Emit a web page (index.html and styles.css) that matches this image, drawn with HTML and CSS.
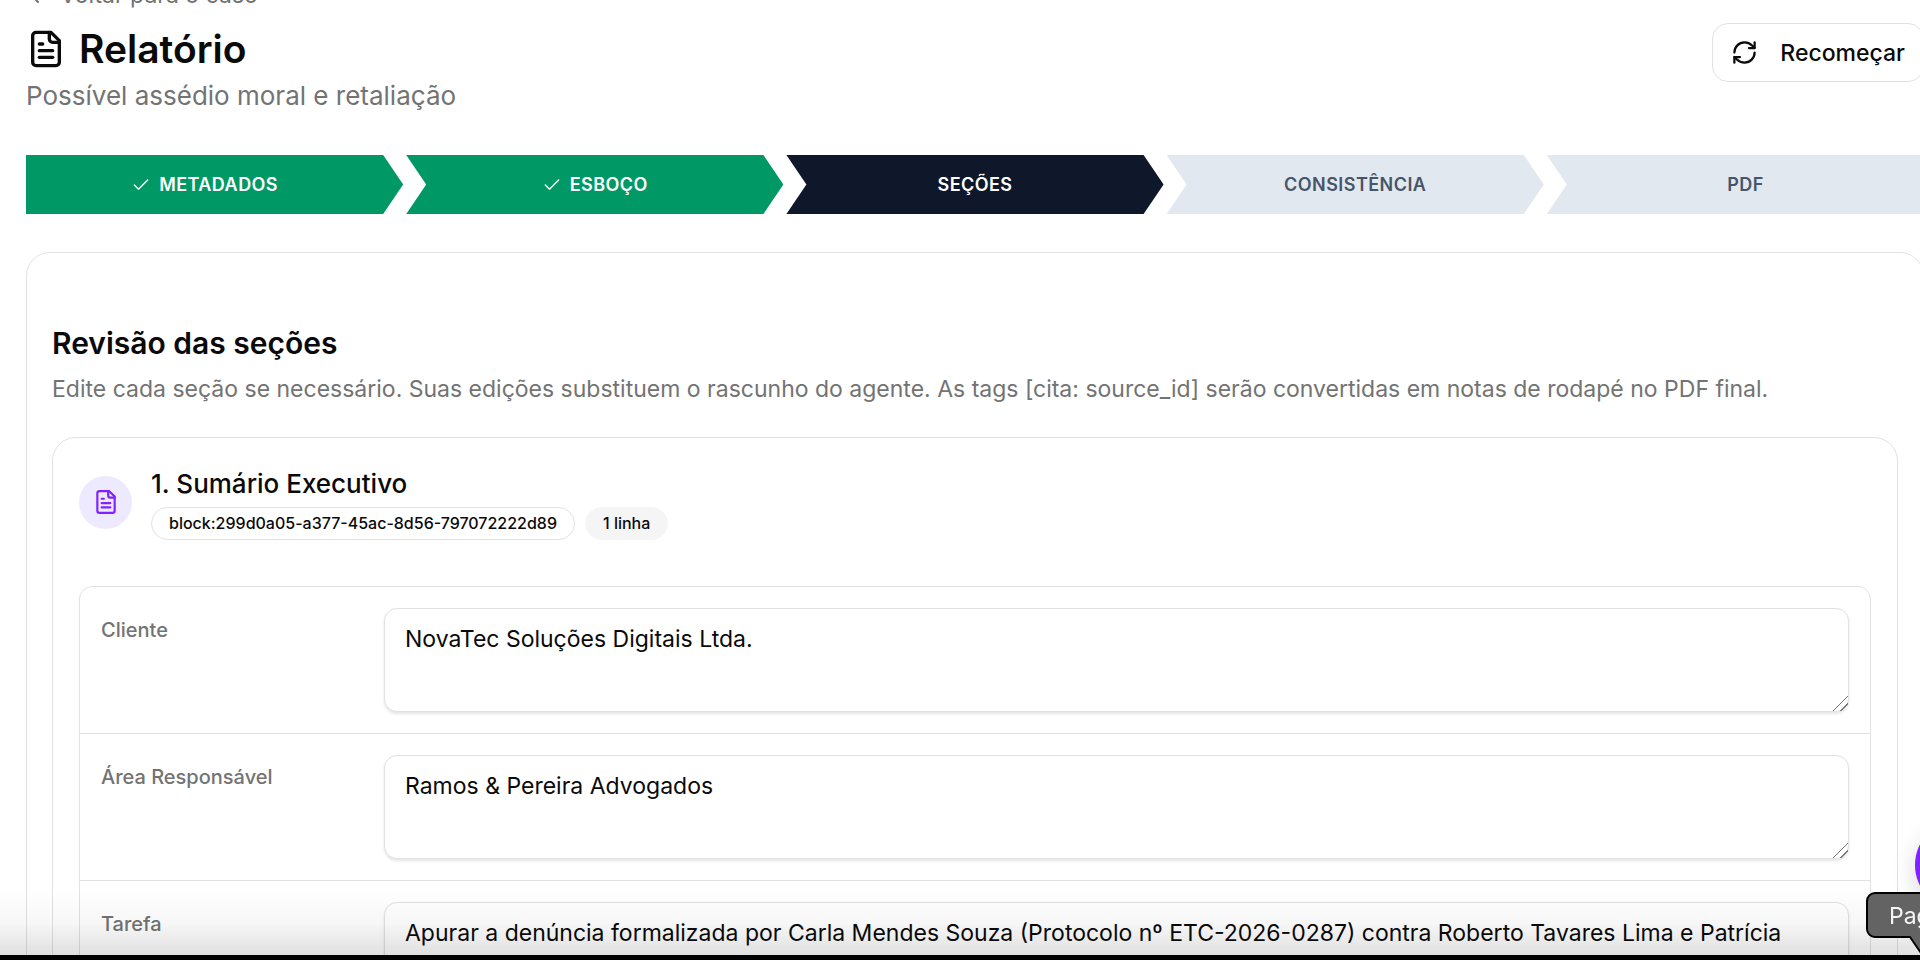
FILE: index.html
```html
<!DOCTYPE html>
<html lang="pt-BR">
<head>
  <meta charset="UTF-8" />
  <meta name="viewport" content="width=device-width, initial-scale=1.0"/>
  <title>Relatório</title>
  <link rel="stylesheet" href="styles.css">
</head>
<body>
  <main class="page">
    <a class="back" href="#">
      <svg class="back-icon" viewBox="0 0 24 24"><path d="m12 19-7-7 7-7"/><path d="M19 12H5"/></svg>
      Voltar para o caso
    </a>

    <header class="header">
      <div>
        <h1 class="title">
          <svg class="title-icon" viewBox="0 0 24 24"><path d="M15 2H6a2 2 0 0 0-2 2v16a2 2 0 0 0 2 2h12a2 2 0 0 0 2-2V7Z"/><path d="M14 2v4a2 2 0 0 0 2 2h4"/><path d="M10 9H8"/><path d="M16 13H8"/><path d="M16 17H8"/></svg>
          Relatório
        </h1>
        <p class="subtitle">Possível assédio moral e retaliação</p>
      </div>
      <button class="restart" type="button">
        <svg class="restart-icon" viewBox="0 0 24 24"><path d="M3 12a9 9 0 0 1 9-9 9.75 9.75 0 0 1 6.74 2.74L21 8"/><path d="M21 3v5h-5"/><path d="M21 12a9 9 0 0 1-9 9 9.75 9.75 0 0 1-6.74-2.74L3 16"/><path d="M8 16H3v5"/></svg>
        Recomeçar
      </button>
    </header>

    <ol class="steps">
      <li class="step done"><svg class="check" viewBox="0 0 24 24"><path d="M20 6 9 17l-5-5"/></svg>METADADOS</li>
      <li class="step done"><svg class="check" viewBox="0 0 24 24"><path d="M20 6 9 17l-5-5"/></svg>ESBOÇO</li>
      <li class="step current">SEÇÕES</li>
      <li class="step">CONSISTÊNCIA</li>
      <li class="step">PDF</li>
    </ol>

    <section class="card">
      <h2 class="card-title">Revisão das seções</h2>
      <p class="card-text">Edite cada seção se necessário. Suas edições substituem o rascunho do agente. As tags [cita: source_id] serão convertidas em notas de rodapé no PDF final.</p>

      <article class="block">
        <div class="block-head">
          <span class="block-icon">
            <svg viewBox="0 0 24 24"><path d="M15 2H6a2 2 0 0 0-2 2v16a2 2 0 0 0 2 2h12a2 2 0 0 0 2-2V7Z"/><path d="M14 2v4a2 2 0 0 0 2 2h4"/><path d="M10 9H8"/><path d="M16 13H8"/><path d="M16 17H8"/></svg>
          </span>
          <div>
            <h3 class="block-title">1. Sumário Executivo</h3>
            <div class="badges">
              <span class="badge">block:299d0a05-a377-45ac-8d56-797072222d89</span>
              <span class="badge muted">1 linha</span>
            </div>
          </div>
        </div>

        <div class="fields">
          <div class="field">
            <label for="cliente">Cliente</label>
            <textarea id="cliente">NovaTec Soluções Digitais Ltda.</textarea>
          </div>
          <div class="field">
            <label for="area">Área Responsável</label>
            <textarea id="area">Ramos &amp; Pereira Advogados</textarea>
          </div>
          <div class="field">
            <label for="tarefa">Tarefa</label>
            <textarea id="tarefa">Apurar a denúncia formalizada por Carla Mendes Souza (Protocolo nº ETC-2026-0287) contra Roberto Tavares Lima e Patrícia</textarea>
          </div>
        </div>
      </article>
    </section>
  </main>

  <button class="chat" type="button" aria-label="Chat"></button>
  <div class="shade"></div>
  <div class="tooltip">
    <svg class="tooltip-shape" viewBox="0 0 120 66"><path d="M9 1H119V45H66L55 61 44 45H9a8 8 0 0 1-8-8V9a8 8 0 0 1 8-8Z"/></svg>
    <span class="tooltip-text">Pag</span>
  </div>
</body>
</html>
```

FILE: styles.css
```css
* {
  box-sizing: border-box;
}
html, body {
  height: 100%;
  overflow: hidden;
}
body {
  margin: 0;
  background: #fff;
  color: #0a0a0a;
  font-family: Inter, "Liberation Sans", sans-serif;
}
h1, h2, h3, p, ol {
  margin: 0;
  padding: 0;
}
svg {
  fill: none;
  stroke: currentColor;
  stroke-width: 2;
  stroke-linecap: round;
  stroke-linejoin: round;
}
/* the page is scrolled a little and runs past the right edge */
.page {
  margin: -21px -4px 0 26px;
}
.back {
  display: flex;
  align-items: center;
  gap: 10px;
  color: #737373;
  font-size: 23px;
  line-height: 32px;
  text-decoration: none;
}
.back-icon {
  width: 24px;
  height: 24px;
}
.header {
  display: flex;
  justify-content: space-between;
  align-items: flex-start;
  margin-top: 12px;
}
.title {
  display: flex;
  align-items: center;
  gap: 13px;
  font-size: 39px;
  font-weight: 600;
  line-height: 52px;
}
.title-icon {
  width: 40px;
  height: 40px;
}
.subtitle {
  color: #737373;
  font-size: 26px;
  line-height: 42px;
}
.restart {
  display: flex;
  align-items: center;
  gap: 22px;
  height: 59px;
  padding: 0 18px;
  border: 1px solid #e2e2e2;
  border-radius: 16px;
  background: #fff;
  color: #0a0a0a;
  font: 500 23px/32px Inter, "Liberation Sans", sans-serif;
}
.restart-icon {
  width: 27px;
  height: 27px;
}
.steps {
  display: grid;
  grid-template-columns: repeat(5, 1fr);
  gap: 3px;
  margin-top: 38px;
  list-style: none;
}
.step {
  display: flex;
  align-items: center;
  justify-content: center;
  gap: 8px;
  height: 59px;
  background: #e2e8f0;
  color: #475569;
  font-size: 18px;
  font-weight: 600;
  letter-spacing: 0.025em;
  clip-path: polygon(0 0, calc(100% - 20px) 0, 100% 50%, calc(100% - 20px) 100%, 0 100%, 20px 50%);
}
.step:first-child {
  padding-right: 20px;
  clip-path: polygon(0 0, calc(100% - 20px) 0, 100% 50%, calc(100% - 20px) 100%, 0 100%);
}
.step:last-child {
  padding-left: 20px;
  clip-path: polygon(0 0, 100% 0, 100% 100%, 0 100%, 20px 50%);
}
.done {
  background: #009966;
  color: #fff;
}
.current {
  background: #0f172b;
  color: #fff;
}
.check {
  width: 20px;
  height: 20px;
  stroke-width: 1.6;
}
.card {
  margin-top: 38px;
  padding: 70px 25px;
  border: 1px solid #e2e2e2;
  border-radius: 24px;
}
.card-title {
  font-size: 30px;
  font-weight: 600;
  line-height: 40px;
}
.card-text {
  margin-top: 9px;
  color: #737373;
  font-size: 23px;
  line-height: 34px;
}
.block {
  margin-top: 31px;
  padding: 26px;
  border: 1px solid #e2e2e2;
  border-radius: 24px;
}
.block-head {
  display: flex;
  align-items: center;
  gap: 19px;
}
.block-icon {
  display: flex;
  align-items: center;
  justify-content: center;
  width: 53px;
  height: 53px;
  border-radius: 50%;
  background: #ede9fe;
  color: #7f22fe;
}
.block-icon svg {
  width: 26px;
  height: 26px;
}
.block-title {
  font-size: 26px;
  font-weight: 500;
  line-height: 40px;
}
.badges {
  display: flex;
  gap: 10px;
  margin-top: 3px;
}
.badge {
  height: 33px;
  padding: 0 17px;
  border: 1px solid #e2e2e2;
  border-radius: 17px;
  font-size: 16px;
  font-weight: 500;
  line-height: 31px;
}
.muted {
  border-color: #f5f5f5;
  background: #f5f5f5;
}
.fields {
  margin-top: 46px;
  border: 1px solid #e2e2e2;
  border-radius: 13px;
}
.field {
  display: grid;
  grid-template-columns: 283px 1fr;
  padding: 21px;
}
.field + .field {
  border-top: 1px solid #e2e2e2;
}
.field label {
  padding-top: 8px;
  color: #737373;
  font-size: 20px;
  font-weight: 500;
  line-height: 28px;
}
.field textarea {
  display: block;
  width: 100%;
  height: 104px;
  padding: 12px 20px;
  border: 1px solid #e2e2e2;
  border-radius: 13px;
  background: #fff;
  box-shadow: 0 2px 3px rgba(0,0,0,0.1);
  color: #0a0a0a;
  font: 400 23px/36px Inter, "Liberation Sans", sans-serif;
  resize: vertical;
}
.field textarea::-webkit-resizer {
  background: linear-gradient(135deg, transparent 47%, #777 47% 52%, transparent 52% 72%, #777 72% 77%, transparent 77%);
}
.chat {
  position: fixed;
  right: -87px;
  bottom: 49px;
  width: 92px;
  height: 92px;
  border: 0;
  border-radius: 50%;
  background: #7f22fe;
  box-shadow: 0 8px 24px rgba(0,0,0,0.15);
}
/* bottom edge of the window */
.shade {
  position: fixed;
  left: 0;
  right: 0;
  bottom: 0;
  height: 70px;
  border-bottom: 5px solid #000;
  background: linear-gradient(rgba(0,0,0,0), rgba(0,0,0,0.03) 50%, rgba(0,0,0,0.12));
  pointer-events: none;
}
.tooltip {
  position: fixed;
  right: -66px;
  bottom: 2px;
  width: 120px;
  height: 66px;
}
.tooltip-shape {
  position: absolute;
  inset: 0;
  fill: #636363;
  stroke: #000;
}
.tooltip-text {
  position: absolute;
  left: 23px;
  top: 9px;
  color: #f5f5f5;
  font-size: 23px;
  line-height: 30px;
}
```
